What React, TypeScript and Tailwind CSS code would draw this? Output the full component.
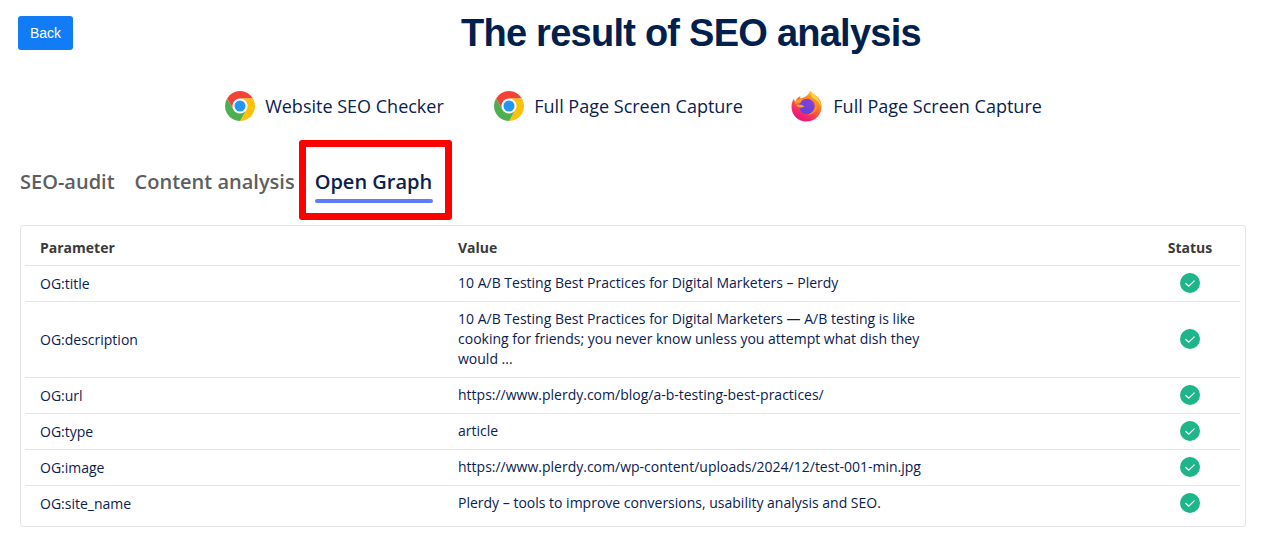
const ROWS = [
  { param: 'OG:title', value: ['10 A/B Testing Best Practices for Digital Marketers – Plerdy'] },
  {
    param: 'OG:description',
    value: [
      '10 A/B Testing Best Practices for Digital Marketers — A/B testing is like',
      'cooking for friends; you never know unless you attempt what dish they',
      'would ...',
    ],
  },
  { param: 'OG:url', value: ['https://www.plerdy.com/blog/a-b-testing-best-practices/'] },
  { param: 'OG:type', value: ['article'] },
  { param: 'OG:image', value: ['https://www.plerdy.com/wp-content/uploads/2024/12/test-001-min.jpg'] },
  { param: 'OG:site_name', value: ['Plerdy – tools to improve conversions, usability analysis and SEO.'] },
];

function ChromeIcon() {
  return (
    <svg width="30" height="30" viewBox="0 0 24 24" className="shrink-0">
      <path d="M1.61 6A12 12 0 0 1 22.39 6H12A6 6 0 0 0 6.8 15Z" fill="#f44336" />
      <path d="M22.39 6A12 12 0 0 1 12 24L17.2 15A6 6 0 0 0 12 6Z" fill="#ffc107" />
      <path d="M12 24A12 12 0 0 1 1.61 6L6.8 15A6 6 0 0 0 17.2 15Z" fill="#4caf50" />
      <circle cx="12" cy="12" r="5.6" fill="#ffffff" />
      <circle cx="12" cy="12" r="4.4" fill="#2196f3" />
    </svg>
  );
}

function FirefoxIcon() {
  return (
    <svg width="32" height="32" viewBox="0 0 32 32" className="shrink-0">
      <defs>
        <linearGradient id="ffBody" x1="0.75" y1="0.05" x2="0.25" y2="0.95">
          <stop offset="0" stopColor="#ffb320" />
          <stop offset="0.45" stopColor="#ff6b2c" />
          <stop offset="0.8" stopColor="#f5256b" />
          <stop offset="1" stopColor="#e31587" />
        </linearGradient>
        <linearGradient id="ffGlobe" x1="0.7" y1="0" x2="0.3" y2="1">
          <stop offset="0" stopColor="#8a3fd6" />
          <stop offset="1" stopColor="#5b45dc" />
        </linearGradient>
      </defs>
      <path
        d="M19.5 0.5C20.5 3 24 4.5 26.5 7C29.5 9.5 30.5 13 30.5 16.5C30.5 25 24 31.5 15.5 31.5C7.5 31.5 0.5 25.5 0.5 17C0.5 13.5 1.5 10.5 3 8.5C3 10 3.5 11 4.5 11.5C5 9 7 7 9.5 6C9 7 9 8 9.5 8.5C12 7.5 17 7 19.5 0.5Z"
        fill="url(#ffBody)"
      />
      <path
        d="M19.5 1C22 4 27 7 29 12C29.7 14 30 15.5 29.8 17C28.5 12 25 10 22.5 8.5C20.5 7 19 4 19.5 1Z"
        fill="#ffd23c"
      />
      <circle cx="16" cy="16.5" r="7.8" fill="url(#ffGlobe)" />
      <path
        d="M3.5 11.5C6 9.5 9 9 12 9.5C10.5 10.5 10 11.5 10 12.5C8.5 12.5 6.5 13 4.5 14.5C5.5 14.8 8 14.5 10 14.8C11.5 15 12 16 13.5 16.5C11.5 18 8 18 6 16C5 15 4 13 3.5 11.5Z"
        fill="#ffa02e"
      />
      <path d="M22 9C25 10.5 26.5 14 26 18C25 22 21 24.5 17 24.5C21 23 24 20 23.8 15.5C23.7 13 23 11 22 9Z" fill="#ff8a1f" />
    </svg>
  );
}

function StatusIcon() {
  return (
    <svg width="20" height="20" viewBox="0 0 20 20">
      <circle cx="10" cy="10" r="10" fill="#1db58a" />
      <path d="M5.5 10.2L8.8 13.2L14.5 7.6" fill="none" stroke="#ffffff" strokeWidth="1.2" />
    </svg>
  );
}

function ExtensionLink({ label, icon, className }: { label: string; icon: React.ReactNode; className?: string }) {
  return (
    <a className={`flex items-center gap-2.5 text-[18px] leading-[32px] text-[#0a2150] ${className ?? ''}`}>
      {icon}
      <span>{label}</span>
    </a>
  );
}

export default function App() {
  return (
    <div className="min-h-[542px] bg-white pr-[19px] pl-5 font-['Open_Sans',sans-serif]">
      <header className="flex items-start pt-4">
        <button className="-ml-0.5 h-[34px] w-[55px] shrink-0 rounded-[3px] bg-[#127bf6] font-['Liberation_Sans',sans-serif] text-sm text-white">
          Back
        </button>
        <h1 className="ml-[388px] font-['Liberation_Sans',sans-serif] text-[38px] leading-[34px] font-bold tracking-[-0.75px] text-[#01204e]">
          The result of SEO analysis
        </h1>
      </header>

      <div className="mt-10 flex items-center justify-center gap-[50.5px] pl-px">
        <ExtensionLink label="Website SEO Checker" icon={<ChromeIcon />} />
        <ExtensionLink label="Full Page Screen Capture" icon={<ChromeIcon />} />
        <ExtensionLink label="Full Page Screen Capture" icon={<FirefoxIcon />} className="-ml-[2px]" />
      </div>

      <nav className="mt-[45px] flex items-start gap-5 text-xl font-semibold text-[#5e5e5e]">
        <span className="leading-[30px]">SEO-audit</span>
        <span className="leading-[30px]">Content analysis</span>
        <span className="relative leading-[30px] text-[#0a2150]">
          Open Graph
          <span className="mt-[2px] block h-1 w-[118px] rounded-sm bg-[#5d7bfb]" />
          <span className="absolute -top-[27px] -right-[19px] -bottom-[17px] -left-4 rounded-[3px] border-[7px] border-[#ff0000]" />
        </span>
      </nav>

      <section className="mt-[22px] rounded-[3px] border border-[#e6e6e6] pt-1 pr-[5px] pb-[5px] pl-1 text-sm text-[#0a2150]">
        <div className="grid h-[35px] grid-cols-[418px_1fr_70px] items-center px-[15px] font-bold text-[#3a3a3a]">
          <span>Parameter</span>
          <span>Value</span>
          <span className="text-center">Status</span>
        </div>
        {ROWS.map((row) => (
          <div
            key={row.param}
            className="grid grid-cols-[418px_1fr_70px] items-center border-t border-[#e6e6e6] px-[15px] pt-[7px] pb-2"
          >
            <span className="pt-[2px] leading-[18px]">{row.param}</span>
            <div className="leading-5">
              {row.value.map((line) => (
                <div key={line}>{line}</div>
              ))}
            </div>
            <div className="flex justify-center">
              <StatusIcon />
            </div>
          </div>
        ))}
      </section>
    </div>
  );
}
